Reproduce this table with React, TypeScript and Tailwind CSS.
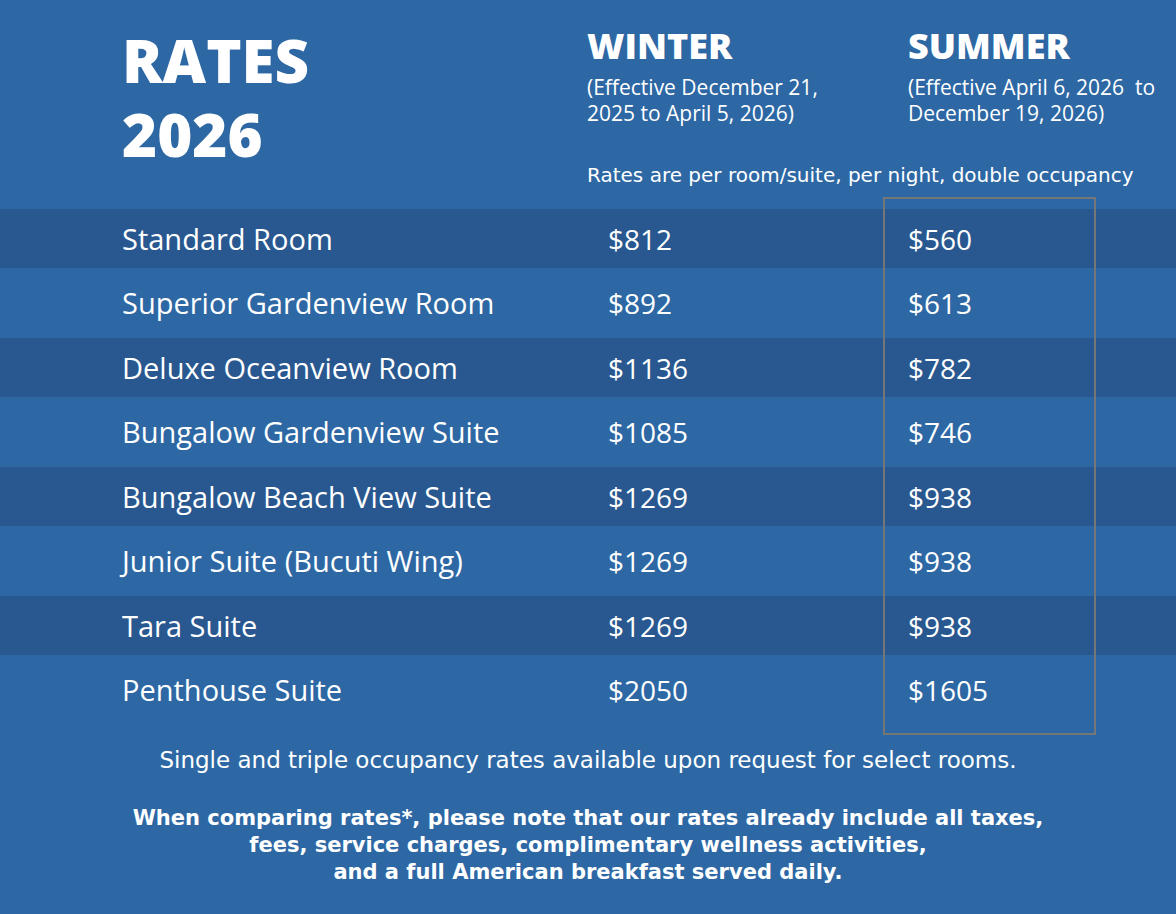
const ROOMS: [string, string, string][] = [
  ['Standard Room', '$812', '$560'],
  ['Superior Gardenview Room', '$892', '$613'],
  ['Deluxe Oceanview Room', '$1136', '$782'],
  ['Bungalow Gardenview Suite', '$1085', '$746'],
  ['Bungalow Beach View Suite', '$1269', '$938'],
  ['Junior Suite (Bucuti Wing)', '$1269', '$938'],
  ['Tara Suite', '$1269', '$938'],
  ['Penthouse Suite', '$2050', '$1605'],
]

const wide = { fontFamily: '"DejaVu Sans", "Open Sans", sans-serif' }

function Season({ name, dates }: { name: string; dates: string[] }) {
  return (
    <div className="flex flex-col">
      <div className="pt-[24px] text-[36px] leading-[44px] font-extrabold">{name}</div>
      <div className="mt-[6px] text-[21px] leading-[26px] font-normal">
        {dates.map((d) => (
          <div key={d} className="whitespace-pre">{d}</div>
        ))}
      </div>
    </div>
  )
}

export default function App() {
  return (
    <div
      className="w-[1176px] h-[914px] bg-[#2d68a5] text-white overflow-hidden"
      style={{ fontFamily: '"Open Sans", "Noto Sans", sans-serif' }}
    >
      {/* header */}
      <div className="flex h-[209px]">
        <div className="w-[587px] pl-[122px] pt-[23px] text-[60px] leading-[74px] font-extrabold">
          <div>RATES</div>
          <div>2026</div>
        </div>
        <div className="flex flex-col">
          <div className="flex">
            <div className="w-[321px]">
              <Season name="WINTER" dates={['(Effective December 21,', '2025 to April 5, 2026)']} />
            </div>
            <Season name="SUMMER" dates={['(Effective April 6, 2026  to', 'December 19, 2026)']} />
          </div>
          <div className="mt-[37px] text-[20px] leading-[24px] whitespace-nowrap" style={wide}>
            Rates are per room/suite, per night, double occupancy
          </div>
        </div>
      </div>

      {/* table */}
      <div className="relative">
        {ROOMS.map(([room, winter, summer], i) => (
          <div
            key={room}
            className={
              i % 2 === 0
                ? 'flex items-center h-[59px] bg-[#28588f] font-medium'
                : 'flex items-center h-[70px] font-medium'
            }
          >
            <div className="w-[608px] pl-[122px] text-[29px]">{room}</div>
            <div className="w-[300px] text-[28px]">{winter}</div>
            <div className="text-[28px]">{summer}</div>
          </div>
        ))}
        <div className="absolute left-[883px] top-[-12px] w-[213px] h-[538px] border-2 border-[#767676]" />
      </div>

      {/* notes */}
      <div className="pt-[21px] text-center" style={wide}>
        <div className="text-[23px] leading-[28px] whitespace-nowrap">
          Single and triple occupancy rates available upon request for select rooms.
        </div>
        <div className="mt-[31px] text-[21px] leading-[27px] font-bold whitespace-nowrap">
          <div>When comparing rates*, please note that our rates already include all taxes,</div>
          <div>fees, service charges, complimentary wellness activities,</div>
          <div>and a full American breakfast served daily.</div>
        </div>
      </div>
    </div>
  )
}
